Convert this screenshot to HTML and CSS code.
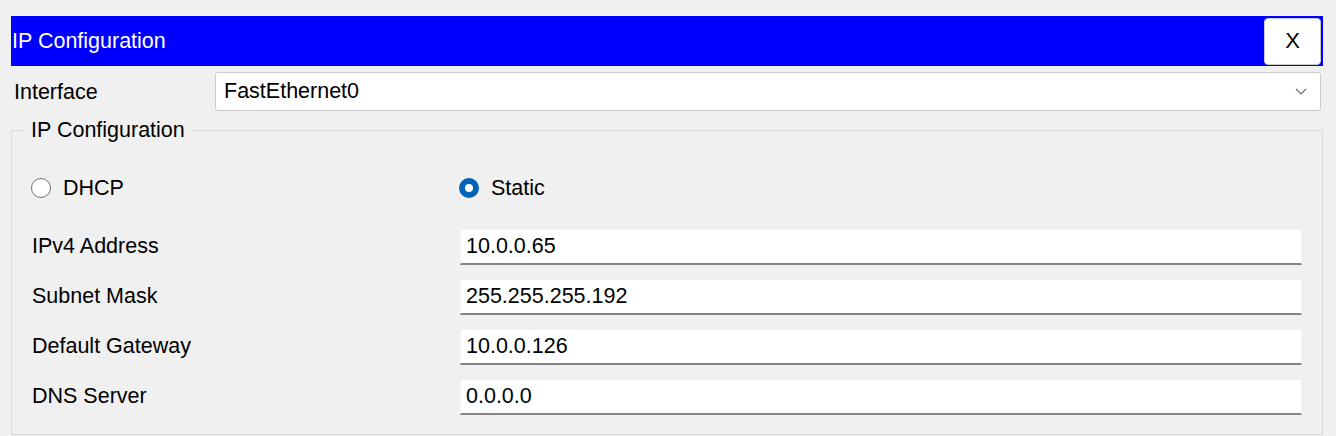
FILE: index.html
```html
<!DOCTYPE html>
<html lang="en">
<head>
<meta charset="utf-8">
<title>IP Configuration</title>
<link rel="stylesheet" href="styles.css">
</head>
<body>
<div class="window">
  <div class="titlebar">
    <span class="title">IP Configuration</span>
    <button class="close" type="button">X</button>
  </div>
  <div class="iface-row">
    <span class="iface-label">Interface</span>
    <div class="select">
      <span>FastEthernet0</span>
      <svg class="chev" width="12" height="7" viewBox="0 0 12 7"><path d="M1 1 L6 6 L11 1" fill="none" stroke="#6b6b6b" stroke-width="1.2"/></svg>
    </div>
  </div>
  <fieldset class="group">
    <legend class="legend">IP Configuration</legend>
    <div class="radio-row">
      <div class="radio-opt"><span class="radio"></span><span>DHCP</span></div>
      <div class="radio-opt"><span class="radio checked"></span><span>Static</span></div>
    </div>
    <div class="field-row"><span class="field-label">IPv4 Address</span><div class="input">10.0.0.65</div></div>
    <div class="field-row"><span class="field-label">Subnet Mask</span><div class="input">255.255.255.192</div></div>
    <div class="field-row"><span class="field-label">Default Gateway</span><div class="input">10.0.0.126</div></div>
    <div class="field-row"><span class="field-label">DNS Server</span><div class="input">0.0.0.0</div></div>
  </fieldset>
</div>
</body>
</html>
```
FILE: styles.css
```css
html, body {
  margin: 0;
  padding: 0;
  background: #f0f0f0;
}
body {
  font-family: "Liberation Sans", Arial, sans-serif;
  font-size: 21.5px;
  color: #000;
}
.window {
  padding: 16px 13px 0 11px;
}
.titlebar {
  height: 50px;
  background: #0000ff;
  display: flex;
  align-items: center;
  justify-content: space-between;
}
.title {
  color: #fff;
  padding-left: 1px;
}
.close {
  width: 57px;
  height: 47px;
  margin-right: 2px;
  background: #fff;
  border: 1px solid #c9c9c9;
  border-radius: 4px;
  font-family: "Liberation Sans", Arial, sans-serif;
  font-size: 22px;
  color: #000;
  padding: 0;
}
.iface-row {
  display: flex;
  align-items: center;
  margin-top: 6px;
  padding-left: 3px;
}
.iface-label {
  width: 201px;
  margin-top: 2px;
}
.select {
  flex: 1;
  height: 39px;
  box-sizing: border-box;
  margin-right: 2px;
  background: #fff;
  border: 1px solid #cbcbcb;
  border-radius: 3px;
  display: flex;
  align-items: center;
  justify-content: space-between;
  padding: 0 13px 0 8px;
}
.chev {
  display: block;
}
.group {
  margin: 7px 0 0 0;
  padding: 27px 20px 19px 20px;
  border: 1px solid #dadada;
  min-width: 0;
}
.legend {
  padding: 0 5px;
  margin-left: -6px;
}
.radio-row {
  display: flex;
  align-items: center;
  height: 36px;
  margin-left: -1px;
}
.radio-opt {
  display: flex;
  align-items: center;
  gap: 12px;
  width: 428px;
}
.radio {
  width: 20px;
  height: 20px;
  box-sizing: border-box;
  border-radius: 50%;
  border: 1.5px solid #707070;
  background: #fff;
}
.radio.checked {
  border: 6px solid #0063b8;
  background: #fff;
}
.field-row {
  display: flex;
  align-items: center;
  margin-top: 14px;
}
.radio-row + .field-row {
  margin-top: 23px;
}
.field-label {
  width: 428px;
  margin-top: -2px;
}
.input {
  flex: 1;
  height: 36px;
  box-sizing: border-box;
  background: #fff;
  border: 1px solid #f3f3f3;
  border-bottom: 2px solid #858585;
  padding: 0 5px;
  display: flex;
  align-items: center;
}
```
